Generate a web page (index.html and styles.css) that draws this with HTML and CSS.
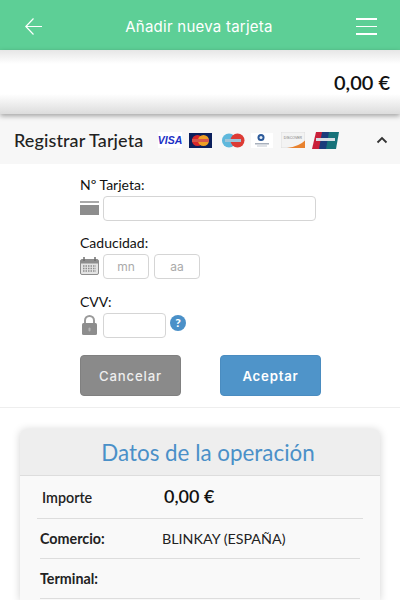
FILE: index.html
```html
<!DOCTYPE html>
<html lang="es">
<head>
  <meta charset="UTF-8" />
  <title>Añadir nueva tarjeta</title>
  <link rel="stylesheet" href="styles.css">
</head>
<body>

  <!-- Cabecera -->
  <div class="topbar">
    <svg class="back" width="17" height="17" viewBox="0 0 17 17"><path d="M17 8.500H1M8.500 .5L.8 8.500l7.700 8" fill="none" stroke="#fff" stroke-width="1.200"/></svg>
    <div class="topbar-title">Añadir nueva tarjeta</div>
    <div class="burger"><span></span><span></span><span></span></div>
  </div>

  <div class="amount">0,00 €</div>

  <!-- Registrar -->
  <div class="register">
    <div class="register-title">Registrar Tarjeta</div>
    <div class="brands">
      <svg width="24" height="16" viewBox="0 0 24 16"><rect width="24" height="16" fill="#fff"/><text x="12" y="12" class="visa" text-anchor="middle">VISA</text></svg>
      <svg width="23" height="15" viewBox="0 0 23 15"><rect width="23" height="15" fill="#0b1f5c"/><circle cx="8.500" cy="7.500" r="5.500" fill="#d8272b"/><circle cx="14.500" cy="7.500" r="5.500" fill="#ef9f25"/><rect x="3" y="6" width="17" height="3" fill="#d8564a"/></svg>
      <svg class="brand-maestro" width="24" height="15" viewBox="0 0 24 15"><circle cx="8" cy="7.500" r="7" fill="#5fb8dc"/><circle cx="16.500" cy="7.500" r="7" fill="#dd3b35"/><rect x="4" y="6" width="16" height="3" fill="#9fc4d8"/></svg>
      <svg class="brand-diners" width="22" height="15" viewBox="0 0 22 15"><rect width="22" height="15" fill="#fff"/><circle cx="10" cy="4.500" r="3.500" fill="#2c5a9a"/><circle cx="10" cy="4.500" r="1.500" fill="#e6edf5"/><rect x="4" y="10" width="14" height="1.500" fill="#a8b0bc"/><rect x="6" y="12.500" width="10" height="1" fill="#c2c7cf"/></svg>
      <svg class="brand-discover" width="24" height="16" viewBox="0 0 24 16"><rect x=".25" y=".25" width="23.500" height="15.500" fill="#f3f3f3" stroke="#ddd" stroke-width=".5"/><text x="12" y="7" class="discover" text-anchor="middle">DISCOVER</text><path d="M24 8.500V16H6q12-1.500 18-7.500z" fill="#e8822f"/></svg>
      <svg width="27" height="17" viewBox="0 0 27 17"><path d="M4 0h8l-3 17H0z" fill="#c9203a"/><path d="M10 0h9l-3 17H7z" fill="#1a3c7c"/><path d="M17 0h10l-3 17h-10z" fill="#16727a"/><rect x="4" y="6" width="19" height="3" fill="#d7dfe6"/></svg>
    </div>
    <svg class="chevron" width="12" height="8" viewBox="0 0 12 8"><path d="M1.500 6.500L6 2l4.500 4.500" fill="none" stroke="#333" stroke-width="1.800"/></svg>
  </div>

  <!-- Formulario -->
  <div class="form">
    <label class="field-label">Nº Tarjeta:</label>
    <div class="field-row">
      <svg class="field-icon" width="19" height="14" viewBox="0 0 19 14"><path d="M0 0h19v2H0z" fill="#a9a9a9"/><path d="M0 4h19v10H0z" fill="#8d8d8d"/></svg>
      <div class="input input-card"></div>
    </div>

    <label class="field-label">Caducidad:</label>
    <div class="field-row row-date">
      <svg class="field-icon" width="19" height="18" viewBox="0 0 19 18"><rect x=".5" y="2.500" width="18" height="15" rx="1.500" fill="#e3e3e3" stroke="#8d8d8d"/><rect x="1" y="3" width="17" height="3.500" fill="#8d8d8d"/><path d="M4 0v4M15 0v4" stroke="#6f6f6f" stroke-width="1.500"/><path d="M3 9h13M3 11.500h13M3 14h13" stroke="#8d8d8d" stroke-width="1.300" stroke-dasharray="1.500 1"/></svg>
      <div class="date-inputs">
        <div class="input input-date">mn</div>
        <div class="input input-date">aa</div>
      </div>
    </div>

    <label class="field-label">CVV:</label>
    <div class="field-row">
      <svg class="field-icon" width="15" height="20" viewBox="0 0 15 20"><path d="M3 9V5.500a4.500 4.500 0 0 1 9 0V9" fill="none" stroke="#9a9a9a" stroke-width="2"/><rect y="8" width="15" height="12" rx="1.500" fill="#8d8d8d"/><rect x="6.500" y="12.500" width="2" height="4" rx="1" fill="#b5b5b5"/></svg>
      <div class="input input-cvv"></div>
      <div class="help">?</div>
    </div>

    <div class="actions">
      <button class="btn btn-cancel">Cancelar</button>
      <button class="btn btn-ok">Aceptar</button>
    </div>
  </div>

  <!-- Datos -->
  <div class="card">
    <div class="card-head">Datos de la operación</div>
    <div class="card-row row-amount">
      <div class="row-label">Importe</div>
      <div class="row-total">0,00 €</div>
    </div>
    <div class="card-row">
      <div class="row-label">Comercio:</div>
      <div class="row-value">BLINKAY (ESPAÑA)</div>
    </div>
    <div class="card-row">
      <div class="row-label">Terminal:</div>
    </div>
  </div>

</body>
</html>
```

FILE: styles.css
```css
html, body {
  height: 600px;
  overflow: hidden;
}

body {
  margin: 0;
  font-family: "Lato", sans-serif;
  background: #fff;
  color: #222;
  display: flex;
  flex-direction: column;
}

.topbar {
  height: 50px;
  flex: none;
  background: #5dcf96;
  display: flex;
  align-items: center;
  justify-content: space-between;
  padding: 3px 23px 0 25px;
  box-sizing: border-box;
}

.topbar-title {
  font-family: "Inter", sans-serif;
  font-size: 15px;
  letter-spacing: 0.25px;
  color: #fff;
}

.burger {
  width: 21px;
  display: flex;
  flex-direction: column;
  gap: 6px;
}

.burger span {
  height: 1.500px;
  background: #fff;
}

.amount {
  height: 64px;
  flex: none;
  box-sizing: border-box;
  padding: 20px 10px 0 0;
  text-align: right;
  font-size: 20px;
  font-weight: 600;
  line-height: 24px;
  color: #111;
  background: linear-gradient(#e6e6e6, #fff 14px, #fff 44px, #dcdcdc);
  box-shadow: 0 2px 5px rgba(0, 0, 0, 0.35);
  position: relative;
}

.register {
  height: 50px;
  flex: none;
  background: #f7f7f7;
  display: flex;
  align-items: center;
  padding: 2px 12px 0 14px;
  box-sizing: border-box;
}

.register-title {
  font-size: 18px;
  letter-spacing: 0.1px;
  font-weight: 500;
  color: #222;
  width: 144px;
}

.brands {
  display: flex;
  align-items: center;
  gap: 7px;
}

.brand-maestro {
  margin-left: 2px;
}

.brand-diners {
  margin-left: -1px;
}

.brand-discover {
  margin-left: 1px;
}

.visa {
  font-family: "Liberation Sans", sans-serif;
  font-size: 10.500px;
  font-weight: 700;
  font-style: italic;
  fill: #1a2fc5;
}

.discover {
  font-family: "Liberation Sans", sans-serif;
  font-size: 3.500px;
  fill: #777;
}

.chevron {
  margin-left: auto;
}

.form {
  height: 244px;
  flex: none;
  box-sizing: border-box;
  padding: 12px 0 0 80px;
  border-bottom: 1px solid #eee;
}

.field-label {
  display: block;
  font-size: 14px;
  line-height: 17px;
  color: #111;
}

.field-row {
  display: flex;
  align-items: center;
  height: 26px;
  margin: 2px 0 13px;
}

.row-date {
  margin-bottom: 14px;
}

.field-icon {
  width: 19px;
  margin-right: 4px;
  flex: none;
}

.input {
  height: 25px;
  box-sizing: border-box;
  border: 1px solid #d5d5d5;
  border-radius: 4px;
  background: #fff;
  font-family: "Inter", sans-serif;
  font-size: 12px;
  color: #aaa;
  display: flex;
  align-items: center;
  justify-content: center;
}

.input-card {
  width: 213px;
}

.date-inputs {
  display: flex;
  gap: 5px;
}

.input-date {
  width: 46px;
}

.input-cvv {
  width: 63px;
}

.help {
  width: 16px;
  height: 16px;
  margin: -4px 0 0 4px;
  border-radius: 50%;
  background: #4a90c8;
  color: #fff;
  font-size: 12px;
  font-weight: 900;
  line-height: 16px;
  text-align: center;
}

.actions {
  display: flex;
  gap: 39px;
  margin-top: 17px;
}

.btn {
  width: 101px;
  height: 41px;
  border-radius: 4px;
  font-family: "Inter", sans-serif;
  font-size: 13.200px;
  font-weight: 600;
  letter-spacing: 0.8px;
  color: #fff;
  padding: 0;
}

.btn-cancel {
  background: #8a8a8a;
  border: 1px solid #808080;
  color: #eee;
  font-weight: 500;
}

.btn-ok {
  background: #4f94c9;
  border: 1px solid #4a8cc0;
}

.card {
  flex: 1;
  min-height: 0;
  margin: 21px 20px 0;
  background: #f9f9f9;
  border-radius: 6px 6px 0 0;
  box-shadow: 0 1px 8px rgba(0, 0, 0, 0.18);
}

.card-head {
  height: 47px;
  box-sizing: border-box;
  background: #eee;
  border-bottom: 1px solid #ddd;
  border-radius: 6px 6px 0 0;
  padding-left: 16px;
  text-align: center;
  font-size: 22.400px;
  line-height: 47px;
  color: #4a90c8;
}

.card-row {
  display: flex;
  align-items: center;
  box-sizing: border-box;
  height: 40px;
  margin: 0 20px;
  border-bottom: 1px solid #ddd;
  font-size: 14.300px;
}

.row-label {
  width: 122px;
  font-weight: 700;
  color: #222;
}

.row-amount {
  height: 43px;
  margin: 0 17px;
}

.row-amount .row-label {
  padding-left: 5px;
  width: 122px;
  font-weight: 600;
}

.row-total {
  font-size: 18px;
  font-weight: 600;
  color: #111;
  margin-top: -3px;
}

.row-value {
  color: #222;
}
```
